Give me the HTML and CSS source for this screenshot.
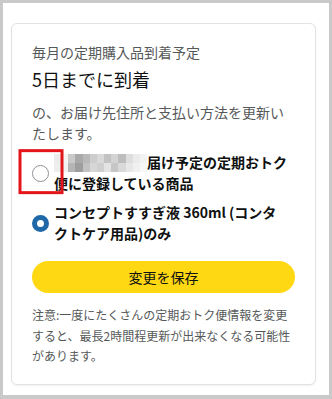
FILE: index.html
```html
<!DOCTYPE html>
<html lang="ja">
<head>
<meta charset="utf-8">
<link rel="stylesheet" href="styles.css">
</head>
<body>
<div class="frame">
  <div class="card">
    <p class="label">毎月の定期購入品到着予定</p>
    <p class="date">5日までに到着</p>
    <p class="desc">の、お届け先住所と支払い方法を更新いたします。</p>
    <div class="options">
      <div class="option">
        <span class="radio-wrap">
          <span class="radio"></span>
          <span class="highlight"></span>
        </span>
        <span class="option-text"><span class="mosaic"><span class="mosaic-grid"><i class="m1"></i><i class="m2"></i><i class="m3"></i><i class="m4"></i><i class="m5"></i><i class="m6"></i><i class="m7"></i><i class="m8"></i><i class="m9"></i><i class="m10"></i><i class="m11"></i><i class="m12"></i><i class="m13"></i><i class="m14"></i><i class="m15"></i><i class="m16"></i><i class="m17"></i><i class="m18"></i><i class="m19"></i><i class="m20"></i><i class="m21"></i><i class="m22"></i><i class="m23"></i><i class="m24"></i><i class="m25"></i><i class="m26"></i></span></span>届け予定の定期おトク便に登録している商品</span>
      </div>
      <div class="option">
        <span class="radio-wrap">
          <span class="radio checked"></span>
        </span>
        <span class="option-text">コンセプトすすぎ液 360ml (コンタクトケア用品)のみ</span>
      </div>
    </div>
    <button class="save" type="button">変更を保存</button>
    <p class="note">注意:一度にたくさんの定期おトク便情報を変更すると、最長2時間程更新が出来なくなる可能性があります。</p>
  </div>
</div>
</body>
</html>
```

FILE: styles.css
```css
html, body {
  margin: 0;
  padding: 0;
  background: #ffffff;
}
body {
  font-family: "Noto Sans CJK JP", "Noto Sans", sans-serif;
  color: #0f1111;
}
.frame {
  width: 332px;
  height: 399px;
  box-sizing: border-box;
  border: 3px solid #c9c9c9;
  border-bottom-width: 4px;
  background: #ffffff;
  padding: 20px 0 0 8px;
}
.card {
  width: 305px;
  height: 362px;
  box-sizing: border-box;
  border: 1px solid #e2e2e2;
  border-radius: 6px;
  box-shadow: 0 1px 2px rgba(0, 0, 0, 0.06);
  padding: 18px 20px 0 20px;
  display: flex;
  flex-direction: column;
}
p {
  margin: 0;
}
.label {
  font-size: 14px;
  line-height: 20px;
  color: #565959;
}
.date {
  font-size: 18px;
  line-height: 26px;
  margin-top: 4px;
  color: #0f1111;
}
.desc {
  font-size: 14px;
  line-height: 21px;
  margin-top: 10px;
  color: #565959;
}
.options {
  display: flex;
  flex-direction: column;
  gap: 8px;
  margin-top: 8px;
}
.option {
  display: flex;
  align-items: center;
  gap: 5px;
}
.radio-wrap {
  position: relative;
  flex: none;
  width: 17px;
  height: 17px;
}
.radio {
  display: block;
  width: 17px;
  height: 17px;
  box-sizing: border-box;
  border: 1px solid #8d9096;
  border-radius: 50%;
  background: #ffffff;
}
.radio.checked {
  border: 5px solid #1f68a8;
}
.highlight {
  position: absolute;
  left: 50%;
  top: 50%;
  width: 45px;
  height: 45px;
  box-sizing: border-box;
  border: 3px solid #e3151a;
  transform: translate(-50%, -53%);
}
.option-text {
  max-width: 235px;
  font-size: 14px;
  line-height: 21px;
  font-weight: 700;
  color: #0f1111;
}
.mosaic {
  display: inline-block;
  overflow: hidden;
  width: 93px;
  height: 18px;
  vertical-align: -4px;
}
.mosaic-grid {
  display: grid;
  grid-template-columns: repeat(13, 1fr);
  grid-template-rows: 9px 9px;
  height: 18px;
}
.mosaic i { display: block; }
.m1 { background: #ececec; } .m2 { background: #f4f4f4; } .m3 { background: #c9c9c9; } .m4 { background: #a9a9a9; }
.m5 { background: #b9b9b9; } .m6 { background: #cdcdcd; } .m7 { background: #d9d9d9; } .m8 { background: #c3c3c3; }
.m9 { background: #d3d3d3; } .m10 { background: #bdbdbd; } .m11 { background: #dedede; } .m12 { background: #ebebeb; }
.m13 { background: #f3f3f3; }
.m14 { background: #eeeeee; } .m15 { background: #f2f2f2; } .m16 { background: #b5b5b5; } .m17 { background: #9e9e9e; }
.m18 { background: #c2c2c2; } .m19 { background: #d6d6d6; } .m20 { background: #cfcfcf; } .m21 { background: #e3e3e3; }
.m22 { background: #c6c6c6; } .m23 { background: #d9d9d9; } .m24 { background: #e7e7e7; } .m25 { background: #f0f0f0; }
.m26 { background: #f7f7f7; }
.save {
  margin-top: 17px;
  height: 32px;
  width: 100%;
  border: none;
  border-radius: 16px;
  background: #ffd814;
  font-family: inherit;
  font-size: 14px;
  color: #0f1111;
  padding: 0;
}
.note {
  margin-top: 12px;
  font-size: 12px;
  line-height: 20.5px;
  color: #565959;
}
```
